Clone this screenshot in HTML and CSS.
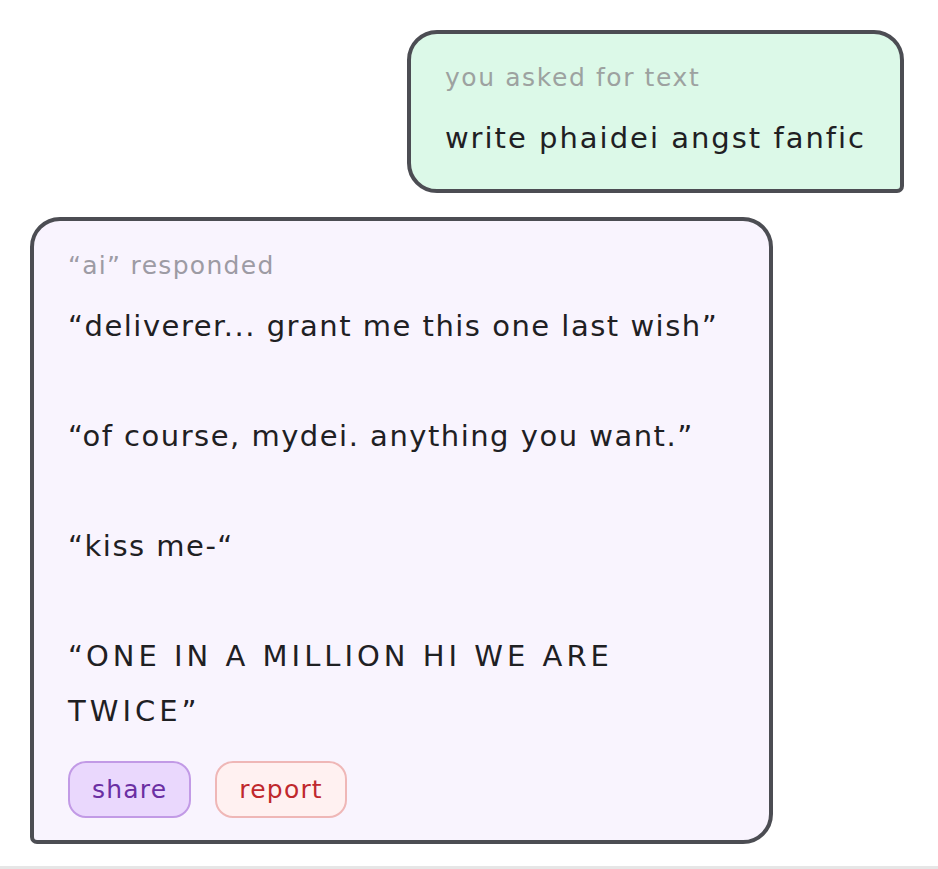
FILE: index.html
```html
<!DOCTYPE html>
<html lang="en">
<head>
<meta charset="utf-8">
<title>chat</title>
<link rel="stylesheet" href="styles.css">
</head>
<body>
<main class="chat">
  <section class="bubble bubble-user">
    <div class="label">you asked for text</div>
    <div class="prompt">write phaidei angst fanfic</div>
  </section>
  <section class="bubble bubble-ai">
    <div class="label">“ai” responded</div>
    <div class="reply">“deliverer... grant me this one last wish”

“of course, mydei. anything you want.”

“kiss me-“

<span class="caps">“ONE IN A MILLION HI WE ARE TWICE”</span></div>
    <div class="actions">
      <button class="btn btn-share">share</button>
      <button class="btn btn-report">report</button>
    </div>
  </section>
</main>
<footer class="composer"></footer>
</body>
</html>
```
FILE: styles.css
```css
html, body {
  margin: 0;
  padding: 0;
  background: #ffffff;
}
body {
  font-family: "DejaVu Sans", "Open Sans", sans-serif;
  color: #1f2023;
  height: 869px;
  display: flex;
  flex-direction: column;
  overflow: hidden;
}
.chat {
  flex: 1;
  display: flex;
  flex-direction: column;
  gap: 24px;
  padding: 30px 34px 0 30px;
}
.bubble {
  border: 4px solid #4c4d53;
  border-radius: 30px;
  box-sizing: border-box;
}
.bubble-user {
  align-self: flex-end;
  background: #dcf9e8;
  border-bottom-right-radius: 7px;
  padding: 26px 34px 29px 34px;
}
.bubble-ai {
  align-self: flex-start;
  background: #f9f4fe;
  border-bottom-left-radius: 7px;
  width: 743px;
  padding: 27px 34px 22px 34px;
}
.label {
  font-size: 25px;
  line-height: 36px;
  letter-spacing: 1.6px;
  color: #9da2a0;
}
.bubble-ai .label {
  letter-spacing: 1.3px;
  color: #9d9ba4;
}
.prompt {
  margin-top: 20px;
  font-size: 29px;
  line-height: 44px;
  letter-spacing: 2px;
}
.reply {
  margin-top: 15px;
  font-size: 29px;
  line-height: 55px;
  letter-spacing: 1.5px;
  white-space: pre-wrap;
}
.caps {
  letter-spacing: 4px;
}
.actions {
  display: flex;
  gap: 24px;
  margin-top: 22px;
}
.btn {
  font-family: inherit;
  font-size: 25px;
  letter-spacing: 1.2px;
  height: 57px;
  padding: 0 22px;
  border-radius: 18px;
  border: 2px solid;
  cursor: pointer;
}
.btn-share {
  background: #ead8fd;
  border-color: #c29ae6;
  color: #6b2fa3;
}
.btn-report {
  background: #fff1f1;
  border-color: #efb7b7;
  color: #c0282d;
}
.composer {
  height: 0;
  border-top: 3px solid #e6e6e6;
}
```
